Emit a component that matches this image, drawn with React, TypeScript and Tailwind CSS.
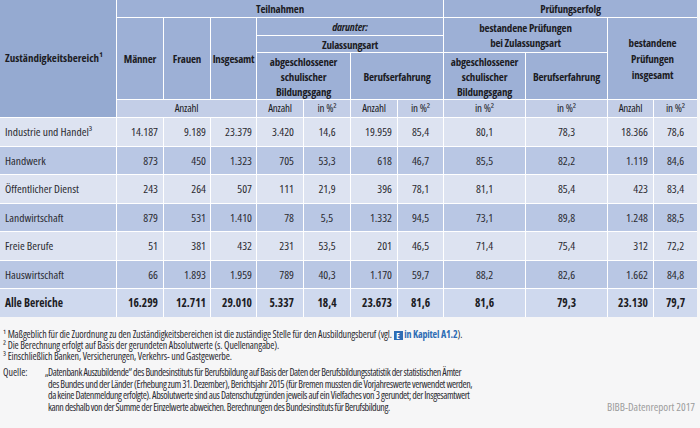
import React from "react";

type Row = string[];

const rows: Row[] = [
  ["Industrie und Handel³", "14.187", "9.189", "23.379", "3.420", "14,6", "19.959", "85,4", "80,1", "78,3", "18.366", "78,6"],
  ["Handwerk", "873", "450", "1.323", "705", "53,3", "618", "46,7", "85,5", "82,2", "1.119", "84,6"],
  ["Öffentlicher Dienst", "243", "264", "507", "111", "21,9", "396", "78,1", "81,1", "85,4", "423", "83,4"],
  ["Landwirtschaft", "879", "531", "1.410", "78", "5,5", "1.332", "94,5", "73,1", "89,8", "1.248", "88,5"],
  ["Freie Berufe", "51", "381", "432", "231", "53,5", "201", "46,5", "71,4", "75,4", "312", "72,2"],
  ["Hauswirtschaft", "66", "1.893", "1.959", "789", "40,3", "1.170", "59,7", "88,2", "82,6", "1.662", "84,8"],
];

const total: Row = ["Alle Bereiche", "16.299", "12.711", "29.010", "5.337", "18,4", "23.673", "81,6", "81,6", "79,3", "23.130", "79,7"];

// alignment per column (0 = label)
const align = [
  "justify-start pl-[5px] text-[11.5px] tracking-[-0.35px]",
  "justify-end pr-[5px]",
  "justify-end pr-[4px]",
  "justify-end pr-[4px]",
  "justify-end pr-[9px]",
  "justify-center",
  "justify-end pr-[5px]",
  "justify-center",
  "justify-center",
  "justify-center",
  "justify-end pr-[5px]",
  "justify-center",
];

const head = "bg-[#9db0d6] flex items-center justify-center text-center font-bold leading-[15px]";
const sub = "bg-[#c3cee7] flex items-center justify-center";

export default function App() {
  return (
    <div className="w-[700px] h-[428px] bg-[#f6f6f7] text-[#1c1c24] font-['Open_Sans',sans-serif] font-stretch-condensed overflow-hidden">
      <div className="w-[697px] grid grid-cols-[116px_46px_46px_45px_46px_46px_46px_45px_81px_81px_45px_43px] grid-rows-[17px_17px_16px_46px_17px_repeat(7,27.5px)] gap-px bg-white text-[11px] tracking-[-0.2px]">
        {/* Header */}
        <div className="col-start-1 row-start-1 row-span-5 bg-[#95aad1] flex items-center pl-[5px] font-bold tracking-normal">
          Zuständigkeitsbereich¹
        </div>
        <div className={`col-start-2 col-span-7 row-start-1 ${head}`}>Teilnahmen</div>
        <div className={`col-start-9 col-span-4 row-start-1 ${head}`}>Prüfungserfolg</div>
        <div className={`col-start-2 row-start-2 row-span-3 ${head}`}>Männer</div>
        <div className={`col-start-3 row-start-2 row-span-3 ${head}`}>Frauen</div>
        <div className={`col-start-4 row-start-2 row-span-3 ${head}`}>Insgesamt</div>
        <div className={`col-start-5 col-span-4 row-start-2 ${head} italic`}>darunter:</div>
        <div className={`col-start-9 col-span-2 row-start-2 row-span-2 ${head}`}>
          bestandene Prüfungen
          <br />
          bei Zulassungsart
        </div>
        <div className={`col-start-11 col-span-2 row-start-2 row-span-3 ${head} leading-[16px]`}>
          bestandene
          <br />
          Prüfungen
          <br />
          insgesamt
        </div>
        <div className={`col-start-5 col-span-4 row-start-3 ${head}`}>Zulassungsart</div>
        <div className={`col-start-5 col-span-2 row-start-4 ${head}`}>
          abgeschlossener
          <br />
          schulischer
          <br />
          Bildungsgang
        </div>
        <div className={`col-start-7 col-span-2 row-start-4 ${head}`}>Berufserfahrung</div>
        <div className={`col-start-9 row-start-4 ${head}`}>
          abgeschlossener
          <br />
          schulischer
          <br />
          Bildungsgang
        </div>
        <div className={`col-start-10 row-start-4 ${head}`}>Berufserfahrung</div>

        <div className={`col-start-2 col-span-3 row-start-5 ${sub}`}>Anzahl</div>
        <div className={`col-start-5 row-start-5 ${sub}`}>Anzahl</div>
        <div className={`col-start-6 row-start-5 ${sub}`}>in %²</div>
        <div className={`col-start-7 row-start-5 ${sub}`}>Anzahl</div>
        <div className={`col-start-8 row-start-5 ${sub}`}>in %²</div>
        <div className={`col-start-9 row-start-5 ${sub}`}>in %²</div>
        <div className={`col-start-10 row-start-5 ${sub}`}>in %²</div>
        <div className={`col-start-11 row-start-5 ${sub}`}>Anzahl</div>
        <div className={`col-start-12 row-start-5 ${sub}`}>in %²</div>

        {/* Body */}
        {rows.map((r, i) =>
          r.map((v, j) => (
            <div
              key={`${i}-${j}`}
              className={`flex items-center text-[11.5px] tracking-normal text-[#2a2a30] ${align[j]} ${
                i % 2 === 0 ? "bg-[#dde3f1]" : "bg-[#b9c7e4]"
              }`}
            >
              {v}
            </div>
          ))
        )}
        {total.map((v, j) => (
          <div
            key={`t-${j}`}
            className={`flex items-center text-[11.5px] tracking-normal font-bold bg-[#cfd9ee] ${align[j]}`}
          >
            {v}
          </div>
        ))}
      </div>

      {/* Notes */}
      <div className="pl-[3px] pt-[12px] text-[10px] leading-[11px] tracking-[-0.15px] text-[#2a2a30]">
        <p>
          ¹ Maßgeblich für die Zuordnung zu den Zuständigkeitsbereichen ist die zuständige Stelle für den
          Ausbildungsberuf (vgl.{" "}
          <span className="inline-flex items-center justify-center w-[9px] h-[9px] bg-[#2f6db5] text-white font-bold text-[8px] leading-none tracking-normal align-[-1px]">
            E
          </span>{" "}
          <span className="font-bold text-[#2f6db5]">in Kapitel A1.2</span>).
        </p>
        <p>² Die Berechnung erfolgt auf Basis der gerundeten Absolutwerte (s. Quellenangabe).</p>
        <p>³ Einschließlich Banken, Versicherungen, Verkehrs- und Gastgewerbe.</p>
      </div>
      <div className="flex items-end pl-[3px] pr-[5px] pt-[5px] text-[10px] leading-[11.7px] text-[#2a2a30]">
        <div className="flex whitespace-nowrap tracking-[-0.4px]">
          <span className="w-[45px] shrink-0 tracking-normal">Quelle:</span>
          <p className="-ml-[3px]">
            „Datenbank Auszubildende“ des Bundesinstituts für Berufsbildung auf Basis der Daten der
            Berufsbildungsstatistik der statistischen Ämter
            <br />
            <span className="pl-[3px]">
              des Bundes und der Länder (Erhebung zum 31. Dezember), Berichtsjahr 2015 (für Bremen mussten die
              Vorjahreswerte verwendet werden,
            </span>
            <br />
            <span className="pl-[3px]">
              da keine Datenmeldung erfolgte). Absolutwerte sind aus Datenschutzgründen jeweils auf ein Vielfaches
              von 3 gerundet; der Insgesamtwert
            </span>
            <br />
            <span className="pl-[3px]">
              kann deshalb von der Summe der Einzelwerte abweichen. Berechnungen des Bundesinstituts für
              Berufsbildung.
            </span>
          </p>
        </div>
        <div className="ml-auto text-[11px] text-[#9c9c9c] leading-[12px] pb-[1px]">BIBB-Datenreport 2017</div>
      </div>
    </div>
  );
}
